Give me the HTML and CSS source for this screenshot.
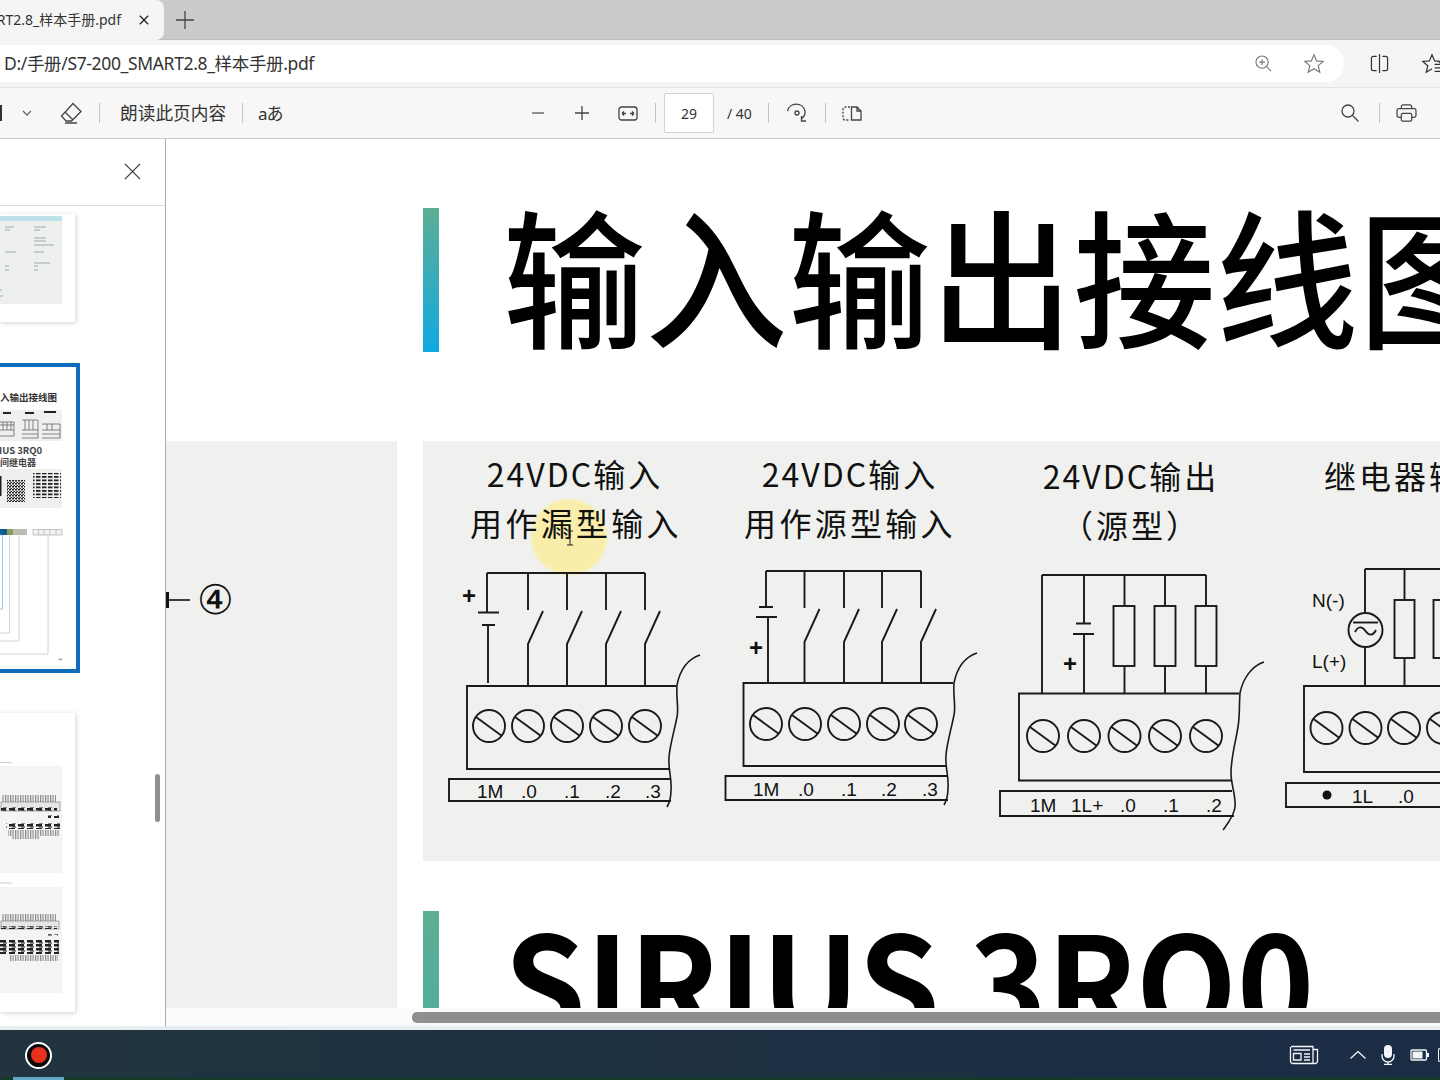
FILE: index.html
```html
<!DOCTYPE html>
<html lang="zh-CN">
<head>
<meta charset="utf-8">
<title>S7-200_SMART2.8_样本手册.pdf</title>
<link rel="stylesheet" href="styles.css">
</head>
<body>
<div class="app">
  <header class="tabstrip">
    <div class="tab">
      <span class="tab-title">S7-200_SMART2.8_样本手册.pdf</span>
      <svg class="tab-close" viewBox="0 0 12 12"><path d="M1 1 11 11M11 1 1 11"/></svg>
    </div>
    <svg class="tab-new" viewBox="0 0 18 18"><path d="M9 0V18M0 9H18"/></svg>
  </header>

  <div class="addressrow">
    <div class="addressbar">
      <span class="url">D:/手册/S7-200_SMART2.8_样本手册.pdf</span>
      <svg class="ic-zoom" viewBox="0 0 18 18"><circle cx="7.5" cy="7.5" r="6.5"/><path d="M12 12 17 17M7.5 4.5V10.5M4.5 7.5H10.5"/></svg>
      <svg class="ic-star" viewBox="0 0 24 24"><path d="M12 2 15 9 22.5 9.6 16.8 14.5 18.6 22 12 18 5.4 22 7.2 14.5 1.5 9.6 9 9Z"/></svg>
    </div>
    <svg class="ic-split" viewBox="0 0 20 20"><path d="M7 2.5H3.5A2 2 0 0 0 1.5 4.500V15.500A2 2 0 0 0 3.500 17.500H7M13 2.500H16.500A2 2 0 0 1 18.500 4.500V15.500A2 2 0 0 1 16.500 17.500H13M10 0V20"/></svg>
    <svg class="ic-fav" viewBox="0 0 24 24"><path d="M20 11 22.5 9.600 15 9 12 2 9 9 1.500 9.600 7.200 14.500 5.400 22 12 18M15 13H24M15 17H24M15 21H24"/></svg>
  </div>

  <nav class="toolbar">
    <span class="stub"></span>
    <svg class="ic-chev" viewBox="0 0 10 6"><path d="M1 1 5 5 9 1"/></svg>
    <svg class="ic-eraser" viewBox="0 0 22 22"><path d="M13 1.500 21 9.500 11.500 19 6 19 1.500 14 Z M5 10 12.500 17.500M5 21H17"/></svg>
    <span class="sep sep-a"></span>
    <span class="tool-text">朗读此页内容</span>
    <span class="sep sep-b"></span>
    <span class="tool-aa">aあ</span>
    <svg class="ic-minus" viewBox="0 0 14 14"><path d="M1 7H13"/></svg>
    <svg class="ic-plus" viewBox="0 0 14 14"><path d="M0 7H14M7 0V14"/></svg>
    <svg class="ic-fit" viewBox="0 0 20 15"><rect x="1" y="1" width="18" height="13" rx="2.500"/><path d="M4 7.500H8M4 7.500 6 5.500M4 7.500 6 9.500M12 7.500H16M16 7.500 14 5.500M16 7.500 14 9.500"/></svg>
    <span class="sep sep-c"></span>
    <span class="pagebox">29</span>
    <span class="pagecount">/ 40</span>
    <span class="sep sep-d"></span>
    <svg class="ic-rotate" viewBox="0 0 22 20"><path d="M1.500 8A9 9 0 0 1 19 8C19.500 11 18 14 15 16M15.500 13V18H20"/><circle cx="11" cy="10" r="2"/></svg>
    <span class="sep sep-e"></span>
    <svg class="ic-pages" viewBox="0 0 20 15"><path class="dash" d="M8 1H3A2 2 0 0 0 1 3V12A2 2 0 0 0 3 14H8"/><path d="M9.500 1H15L19 5V14H9.500ZM15 1V5H19"/></svg>
    <svg class="ic-search" viewBox="0 0 18 18"><circle cx="7" cy="7" r="6"/><path d="M11.500 11.500 17.500 17.500"/></svg>
    <span class="sep sep-f"></span>
    <svg class="ic-print" viewBox="0 0 22 19"><path d="M5.500 5V3A2 2 0 0 1 7.500 1H14.500A2 2 0 0 1 16.500 3V5M5.500 14H3A2 2 0 0 1 1 12V7A2 2 0 0 1 3 5H19A2 2 0 0 1 21 7V12A2 2 0 0 1 19 14H16.500"/><rect x="5.500" y="10" width="11" height="8" rx="1.500"/></svg>
  </nav>

  <div class="workspace">
    <aside class="sidebar">
      <div class="side-head">
        <svg class="ic-x" viewBox="0 0 18 18"><path d="M1 1 17 17M17 1 1 17"/></svg>
      </div>
      <div class="thumbs">
        <div class="thumb thumb-a">
          <svg class="thumb-svg" viewBox="0 214 75 108">
            <rect class="th-panel" x="0" y="216" width="62" height="88"/>
            <rect class="th-cyan" x="0" y="216" width="62" height="5"/>
            <path class="th-bits" d="M5 227H14M34 227H46M5 230H10M34 230H40M34 238H46M34 241H46M34 245H54M5 252H16M34 252H44M34 263H50M5 266H9M34 266H38M5 270H9M34 270H38M0 290H2M0 296H3"/>
          </svg>
        </div>
        <div class="thumb thumb-b">
          <svg class="thumb-svg" viewBox="0 367 76 302">
            <defs>
              <pattern id="qr" width="3" height="3" patternUnits="userSpaceOnUse"><rect class="th-dark" width="2" height="1.500"/><rect class="th-dark" x="1.500" y="2" width="1.500" height="1"/></pattern>
              <pattern id="txt" width="6" height="3.500" patternUnits="userSpaceOnUse"><rect class="th-dark" width="4.500" height="1.800"/></pattern>
            </defs>
            <text class="th-title" x="0" y="401">入输出接线图</text>
            <rect class="th-panel" x="0" y="410" width="62" height="31"/>
            <path class="th-mini" d="M0 422H14V436H0M0 425H14M0 430H14M3 422V430M7 422V430M11 422V430M22 420H38V438H22M22 430H38M25 420V430M29 420V430M33 420V430M22 434H38M42 424H60V438H42M42 430H60M47 424V430M52 424V430M42 434H60"/>
            <rect class="th-dark" x="3" y="412" width="8" height="2"/>
            <rect class="th-dark" x="25" y="412" width="9" height="2"/>
            <rect class="th-dark" x="44" y="411" width="12" height="2"/>
            <text class="th-sub" x="-1" y="454">IUS 3RQ0</text>
            <text class="th-sub2" x="0" y="466">间继电器</text>
            <rect class="th-panel" x="0" y="469" width="62" height="39"/>
            <rect x="7" y="480" width="18" height="22" class="th-qr"/>
            <rect x="33" y="473" width="28" height="25" class="th-text"/>
            <rect class="th-dark" x="0" y="476" width="1.500" height="20"/>
            <rect class="th-blue" x="0" y="529" width="7" height="6"/>
            <rect class="th-olive" x="7" y="529" width="6" height="6"/>
            <rect class="th-grey" x="13" y="529" width="14" height="6"/>
            <path class="th-cell" d="M33 529.500H62V535H33ZM38.500 529.500V535M44 529.500V535M50 529.500V535M56 529.500V535"/>
            <path class="th-fr-blue" d="M0 535H2.500V609H0"/>
            <path class="th-fr" d="M9.500 535V633H0M19 535V641H0M48 535V654H0"/>
            <rect class="th-mark" x="59" y="659" width="3" height="1"/>
          </svg>
        </div>
        <div class="thumb thumb-c">
          <svg class="thumb-svg" viewBox="0 713 75 299">
            <defs>
              <pattern id="hatch" width="2.500" height="4" patternUnits="userSpaceOnUse"><rect class="th-stripe" width="1.200" height="4"/></pattern>
              <pattern id="scrib" width="9" height="4" patternUnits="userSpaceOnUse"><rect class="th-dark" width="6" height="2.500"/><rect class="th-dark" x="3" y="2.500" width="4" height="1"/></pattern>
            </defs>
            <rect class="th-light" x="0" y="766" width="62" height="107"/>
            <rect class="th-light" x="0" y="887" width="62" height="106"/>
            <path class="th-mark" d="M0 762.500H12M0 883H12"/>
            <rect class="th-hatch" x="2" y="795" width="54" height="7"/>
            <rect class="th-frame" x="1" y="802" width="59" height="9"/>
            <rect class="th-band" x="1" y="807" width="56" height="4"/>
            <rect class="th-band" x="48" y="815" width="11" height="3"/>
            <rect class="th-band" x="6" y="823" width="54" height="6"/>
            <rect class="th-hatch" x="8" y="830" width="52" height="6"/>
            <rect class="th-hatch" x="12" y="836" width="28" height="3"/>
            <rect class="th-hatch" x="2" y="914" width="54" height="7"/>
            <rect class="th-frame" x="1" y="921" width="58" height="8"/>
            <rect class="th-band" x="1" y="926" width="56" height="3"/>
            <rect class="th-band" x="48" y="934" width="10" height="2"/>
            <rect class="th-band" x="0" y="940" width="59" height="14"/>
            <rect class="th-hatch" x="10" y="955" width="48" height="6"/>
          </svg>
        </div>
      </div>
      <span class="side-scroll"></span>
    </aside>

    <main class="viewer">
      <div class="page">
        <div class="heading">
          <span class="heading-bar"></span>
          <h1 class="heading-text">输入输出接线图</h1>
        </div>
        <div class="page-row">
          <div class="left-panel">
            <svg class="pin" viewBox="0 0 24 18"><path class="pin-bar" d="M1.500 1V17"/><path d="M1 9H24"/></svg>
            <span class="pin-num">④</span>
          </div>
          <div class="right-col">
            <div class="diagram-panel">
              <svg class="diagram" viewBox="423 441 1017 420">
                <defs>
                  <g id="screw"><circle cx="0" cy="0" r="16"/><path d="M-13 -9 13 10"/></g>
                  <g id="sw"><path d="M0 0V37M15 38 0 71V112"/></g>
                </defs>
                <circle class="spot" cx="569" cy="537" r="38"/>

                <text class="cap" x="575" y="487"><tspan class="lat">24VDC</tspan>输入</text>
                <text class="cap cap-w" x="576" y="536">用作漏型输入</text>
                <text class="cap" x="850" y="487"><tspan class="lat">24VDC</tspan>输入</text>
                <text class="cap cap-w" x="850" y="536">用作源型输入</text>
                <text class="cap" x="1131" y="489"><tspan class="lat">24VDC</tspan>输出</text>
                <text class="cap" x="1131" y="538">（源型）</text>
                <text class="cap cap-l" x="1324" y="489">继电器输出</text>

                <path class="cursor" d="M567 531H573M570 531V545M567 545H573"/>

                <!-- sinking input -->
                <g class="wire">
                  <path d="M487 573H645M487 573V612M478 612.500H499M482 625H495M488 625V683"/>
                  <use href="#sw" x="528" y="573"/><use href="#sw" x="567" y="573"/><use href="#sw" x="606" y="573"/><use href="#sw" x="645" y="573"/>
                  <path d="M676 686H467V769H669M670 779H449V801H671"/>
                  <path class="wave" d="M700 655C688 659 680 670 677 685C676 700 679 708 677 717C674 732 670 745 669 757C668 770 672 778 671 790C671 798 670 802 667 807"/>
                  <use href="#screw" x="489" y="726"/><use href="#screw" x="528" y="726"/><use href="#screw" x="567" y="726"/><use href="#screw" x="606" y="726"/><use href="#screw" x="645" y="726"/>
                </g>
                <text class="plus" x="469" y="604">+</text>
                <text class="lab" x="477" y="798">1M</text><text class="lab" x="521" y="798">.0</text><text class="lab" x="564" y="798">.1</text><text class="lab" x="605" y="798">.2</text><text class="lab" x="645" y="798">.3</text>

                <!-- sourcing input -->
                <g class="wire">
                  <path d="M766 571H921M766 571V607M759 607H773M756 617H777M768 617V683"/>
                  <use href="#sw" x="804.500" y="571"/><use href="#sw" x="844" y="571"/><use href="#sw" x="882" y="571"/><use href="#sw" x="921" y="571"/>
                  <path d="M953 683H743.500V766H946M947 776H725.500V800H948"/>
                  <path class="wave" d="M977 653C965 657 957 668 954 683C953 698 956 706 954 715C951 730 947 743 946 755C945 768 949 776 948 788C948 796 947 800 944 805"/>
                  <use href="#screw" x="766" y="724"/><use href="#screw" x="805" y="724"/><use href="#screw" x="844" y="724"/><use href="#screw" x="883" y="724"/><use href="#screw" x="921" y="724"/>
                </g>
                <text class="plus" x="756" y="656">+</text>
                <text class="lab" x="753" y="796">1M</text><text class="lab" x="798" y="796">.0</text><text class="lab" x="841" y="796">.1</text><text class="lab" x="881" y="796">.2</text><text class="lab" x="922" y="796">.3</text>

                <!-- sourcing output -->
                <g class="wire">
                  <path d="M1042 575H1206M1042 575V693M1084 575V623M1076 623.500H1091M1073 634H1094M1084 634V693"/>
                  <path d="M1124.500 575V606M1124.500 666V693M1165 575V606M1165 666V693M1206 575V606M1206 666V693"/>
                  <rect x="1113.500" y="606" width="21" height="60"/><rect x="1154.500" y="606" width="21" height="60"/><rect x="1195.500" y="606" width="21" height="60"/>
                  <path d="M1239 693.500H1019V780.500H1231M1232 791H1000V816H1234"/>
                  <path class="wave" d="M1264 662C1252 666 1243 678 1240 693C1239 706 1240 715 1238 727C1235 745 1231 758 1231 773C1231 785 1236 795 1235 807C1234 816 1228 823 1223 830"/>
                  <use href="#screw" x="1043" y="736"/><use href="#screw" x="1084" y="736"/><use href="#screw" x="1124.500" y="736"/><use href="#screw" x="1165" y="736"/><use href="#screw" x="1206" y="736"/>
                </g>
                <text class="plus" x="1070" y="672">+</text>
                <text class="lab" x="1030" y="812">1M</text><text class="lab" x="1071" y="812">1L+</text><text class="lab" x="1120" y="812">.0</text><text class="lab" x="1163" y="812">.1</text><text class="lab" x="1206" y="812">.2</text>

                <!-- relay output -->
                <g class="wire">
                  <path d="M1365 569H1440M1365 569V612M1365 648V686M1404.500 569V600M1404.500 658V686M1443 569V600M1443 658V686"/>
                  <circle cx="1365.500" cy="630" r="17"/>
                  <path d="M1353 622.500H1378"/>
                  <path d="M1355 632C1358 626 1362 626 1365.500 631C1369 636 1373 636 1376 630"/>
                  <rect x="1394.500" y="600" width="20" height="58"/><rect x="1433.500" y="600" width="20" height="58"/>
                  <path d="M1450 686H1304V772H1450M1450 783H1286V807H1450"/>
                  <use href="#screw" x="1326.500" y="728"/><use href="#screw" x="1365.500" y="728"/><use href="#screw" x="1404" y="728"/><use href="#screw" x="1443" y="728"/>
                </g>
                <text class="lab" x="1312" y="607">N(-)</text>
                <text class="lab" x="1312" y="668">L(+)</text>
                <circle class="dot" cx="1327" cy="795" r="4.500"/>
                <text class="lab" x="1352" y="803">1L</text><text class="lab" x="1398" y="803">.0</text>
              </svg>
            </div>
            <div class="heading heading-second">
              <span class="heading-bar heading-bar-green"></span>
              <h2 class="heading-latin">SIRIUS 3RQ0</h2>
            </div>
          </div>
        </div>
      </div>
      <div class="hscroll"><span class="hscroll-thumb"></span></div>
    </main>
  </div>

  <footer class="taskbar">
    <span class="rec"><span class="rec-dot"></span></span>
    <span class="rec-line"></span>
    <div class="tray">
      <svg class="ic-news" viewBox="0 0 30 20"><path d="M2 1.500H24V18.500H4A2.500 2.500 0 0 1 1.500 16V2M24 4.500H28.500V16A2.500 2.500 0 0 1 26 18.500H24"/><path d="M4.500 5H21M4.500 8.500H12V15H4.500ZM15 9H21M15 12H21M15 15H21"/></svg>
      <svg class="ic-up" viewBox="0 0 16 8"><path d="M.5 7.500 8 .5 15.500 7.500"/></svg>
      <svg class="ic-mic" viewBox="0 0 14 20"><rect class="solid" x="3" y="0" width="8" height="13" rx="4"/><path d="M1 9V11A6 6 0 0 0 13 11V9M7 17V19.500M3 19.500H11"/></svg>
      <svg class="ic-batt" viewBox="0 0 19 12"><rect x="1" y="1" width="15.500" height="10" rx="1"/><rect class="solid" x="2.500" y="2.500" width="10" height="7"/><rect class="solid" x="17" y="4" width="2" height="4"/></svg>
      <span class="tray-cut"></span>
    </div>
  </footer>
</div>
</body>
</html>
```

FILE: styles.css
```css
* { box-sizing: border-box; }
html, body { margin: 0; padding: 0; }
body { width: 1440px; height: 1080px; overflow: hidden; background: #fff; font-family: "Noto Sans", "Noto Sans CJK SC", sans-serif; color: #222; }
svg { display: block; flex: none; fill: none; stroke: #333; }
.app { display: flex; flex-direction: column; height: 1080px; width: 1440px; }

/* tab strip */
.tabstrip { height: 40px; background: #cbcbcb; display: flex; align-items: center; flex: none; box-shadow: inset 0 -1px 0 #bdbdbd; }
.tab { width: 164px; height: 40px; background: #f5f5f5; border-radius: 0 8px 8px 0; display: flex; align-items: center; justify-content: flex-end; overflow: hidden; padding-right: 15px; }
.tab-title { white-space: nowrap; font-size: 14px; letter-spacing: 0; flex: none; margin: -2px 18px 0 0; color: #333; }
.tab-close { width: 10px; height: 10px; stroke-width: 1.600; stroke: #222; }
.tab-new { width: 18px; height: 18px; margin-left: 12px; stroke: #444; stroke-width: 1.300; }

/* address row */
.addressrow { height: 48px; flex: none; background: #f5f5f5; display: flex; align-items: center; border-bottom: 1px solid #e6e6e6; }
.addressbar { width: 1344px; height: 37px; background: #fff; border-radius: 0 18px 18px 0; display: flex; align-items: center; padding-left: 4px; flex: none; }
.url { font-size: 17.500px; letter-spacing: -0.350px; width: 1250px; white-space: nowrap; color: #333; flex: none; margin-top: -2px; }
.ic-zoom { width: 17px; height: 17px; stroke: #777; stroke-width: 1.200; margin-left: 1px; }
.ic-star { width: 22px; height: 21px; stroke: #777; stroke-width: 1.300; margin-left: 31px; }
.ic-split { width: 19px; height: 19px; stroke: #333; stroke-width: 1.300; margin-left: 26px; }
.ic-fav { width: 22px; height: 21px; stroke: #333; stroke-width: 1.400; margin-left: 32px; }

/* pdf toolbar */
.toolbar { height: 51px; flex: none; background: #f7f7f7; border-bottom: 1px solid #c9c9c9; display: flex; align-items: center; color: #333; }
.toolbar svg { stroke: #444; stroke-width: 1.300; }
.stub { width: 2px; height: 16px; background: #333; flex: none; }
.ic-chev { width: 10px; height: 6px; margin-left: 20px; stroke: #666 !important; }
.ic-eraser { width: 22px; height: 22px; margin-left: 28px; }
.sep { width: 1px; height: 20px; background: #c4c4c4; flex: none; }
.sep-a { margin-left: 17px; }
.tool-text { font-size: 17.700px; margin: -2px 0 0 20px; width: 106px; white-space: nowrap; flex: none; }
.sep-b { margin-left: 16px; }
.tool-aa { font-size: 17px; margin: -2px 0 0 15px; width: 24px; white-space: nowrap; flex: none; letter-spacing: -1px; }
.ic-minus { width: 14px; height: 14px; margin-left: 249px; stroke: #555 !important; }
.ic-plus { width: 14px; height: 14px; margin-left: 30px; }
.ic-fit { width: 20px; height: 15px; margin-left: 29px; }
.sep-c { margin-left: 17px; }
.pagebox { width: 50px; height: 40px; margin-left: 8px; background: #fff; border: 1px solid #d2d2d2; border-radius: 2px; font-size: 14px; display: flex; align-items: center; justify-content: center; flex: none; }
.pagecount { font-size: 14px; margin-left: 13px; width: 26px; white-space: nowrap; flex: none; }
.sep-d { margin-left: 15px; }
.ic-rotate { width: 22px; height: 20px; margin-left: 17px; }
.sep-e { margin-left: 17px; }
.ic-pages { width: 20px; height: 15px; margin-left: 16px; }
.dash { stroke-dasharray: 2 1.500; }
.ic-search { width: 18px; height: 18px; margin-left: 479px; }
.sep-f { margin-left: 20px; }
.ic-print { width: 21px; height: 18px; margin-left: 16px; }

/* workspace */
.workspace { height: 887px; flex: none; display: flex; }
.sidebar { width: 166px; flex: none; background: #fff; border-right: 1px solid #ababab; position: relative; overflow: hidden; }
.side-head { height: 67px; border-bottom: 1px solid #dedede; display: flex; align-items: center; justify-content: flex-end; padding: 0 24px 2px 0; }
.ic-x { width: 17px; height: 17px; stroke: #333; stroke-width: 1.200; }
.thumbs { display: flex; flex-direction: column; align-items: flex-start; padding-top: 8px; }
.thumb { background: #fff; box-shadow: 1px 1px 5px rgba(0,0,0,.18); flex: none; }
.thumb-a { width: 75px; height: 108px; }
.thumb-b { width: 80px; height: 310px; margin-top: 41px; border: 4px solid #0f6cbd; border-left: 0; box-shadow: none; }
.thumb-c { width: 75px; height: 299px; margin-top: 40px; }
.thumb-svg { width: 100%; height: 100%; stroke: none; }
.thumb-a .thumb-svg, .thumb-c .thumb-svg { filter: blur(.25px); }
.th-panel { fill: #eef0ee; stroke: none; }
.th-cyan { fill: #bfe1ea; stroke: none; }
.th-bits { stroke: #9aa; stroke-width: 1; }
.th-dark { fill: #222; stroke: none; }
.th-title { font-size: 9.500px; font-weight: 700; fill: #333; stroke: none; font-family: "Noto Sans CJK SC", sans-serif; }
.th-sub { font-size: 9.500px; font-weight: 700; fill: #444; stroke: none; font-family: "Noto Sans CJK SC", sans-serif; }
.th-sub2 { font-size: 9px; font-weight: 700; fill: #444; stroke: none; font-family: "Noto Sans CJK SC", sans-serif; }
.th-mini { stroke: #555; stroke-width: .7; }
.th-qr { fill: url(#qr); stroke: none; }
.th-text { fill: url(#txt); stroke: none; }
.th-blue { fill: #0f5a96; stroke: none; }
.th-olive { fill: #8a9f54; stroke: none; }
.th-grey { fill: #b9bdb2; stroke: none; }
.th-cell { stroke: #b5b5b5; stroke-width: .8; fill: #f2f2f2; }
.th-fr { stroke: #c9c9c9; stroke-width: .8; }
.th-fr-blue { stroke: #8fb7d8; stroke-width: .8; }
.th-mark { fill: #888; stroke: #aaa; stroke-width: .6; }
.th-light { fill: #f4f4f4; stroke: none; }
.th-stripe { fill: #8a8a8a; stroke: none; }
.th-hatch { fill: url(#hatch); stroke: none; }
.th-frame { fill: #e6e6e6; stroke: #777; stroke-width: .6; }
.th-band { fill: url(#scrib); stroke: none; }
.side-scroll { position: absolute; left: 155px; top: 635px; width: 5px; height: 48px; background: #8f8f8f; border-radius: 3px; }

/* pdf viewer */
.viewer { flex: 1; min-width: 0; display: flex; flex-direction: column; background: #fbfbfb; overflow: hidden; }
.page { height: 869px; flex: none; background: #fff; overflow: hidden; padding-top: 69px; }
.heading { display: flex; align-items: center; margin-left: 257px; white-space: nowrap; }
.heading-bar { width: 16px; height: 144px; flex: none; background: linear-gradient(180deg, #5dae94, #10a9e2); }
.heading-text { margin: 0 0 0 64px; padding-bottom: 16px; font-family: "Noto Sans CJK SC", sans-serif; font-weight: 500; font-size: 142px; line-height: 128px; color: #000; flex: none; letter-spacing: .600px; transform: scaleY(1.050); transform-origin: 50% 50%; }
.page-row { display: flex; gap: 26px; margin-top: 89px; width: 1274px; }
.left-panel { width: 231px; height: 567px; background: #f0f1ee; flex: none; display: flex; align-items: flex-start; padding-top: 139px; align-self: flex-start; }
.pin { width: 24px; height: 18px; stroke: #111; stroke-width: 1.600; margin-top: 11px; }
.pin-bar { stroke-width: 3; }
.pin-num { font-family: "DejaVu Sans", "Noto Sans CJK SC", sans-serif; font-size: 41px; line-height: 40px; margin: 0 0 0 7px; color: #111; }
.right-col { flex: 1; min-width: 0; }
.diagram-panel { height: 420px; background: #f0f1ee; overflow: hidden; }
.diagram { width: 1017px; height: 420px; stroke: none; }
.spot { fill: #f8eeaa; stroke: none; filter: blur(1px); }
.cap { font-family: "Noto Sans CJK SC", sans-serif; font-size: 32px; letter-spacing: 3px; text-anchor: middle; fill: #111; stroke: none; }
.cap-w { letter-spacing: 3.300px; }
.lat { letter-spacing: 2px; }
.cap-l { text-anchor: start; }
.cursor { stroke: #222; stroke-width: 1; }
.wire { stroke: #1a1a1a; stroke-width: 1.900; fill: none; }
.wave { stroke-width: 1.600; }
.plus { font-family: "Liberation Sans", sans-serif; font-size: 24px; font-weight: 700; text-anchor: middle; fill: #111; stroke: none; }
.lab { font-family: "Liberation Sans", sans-serif; font-size: 19px; fill: #111; stroke: none; }
.dot { fill: #111; stroke: none; }
.heading-second { margin-left: 0; margin-top: 50px; }
.heading-bar-green { background: linear-gradient(180deg, #5dae94, #4fae9e); }
.heading-latin { margin: 0 0 0 65px; padding-bottom: 12px; font-family: "Noto Sans CJK SC", sans-serif; font-weight: 700; font-size: 131px; line-height: 132px; color: #000; flex: none; transform: scaleY(1.050); }

/* horizontal scrollbar */
.hscroll { height: 18px; flex: none; padding: 4px 0 0 246px; }
.hscroll-thumb { display: block; height: 11px; background: #8f8f8f; border-radius: 5px 0 0 5px; }

/* taskbar */
.taskbar { height: 54px; flex: none; border-top: 4px solid #e9edf0; background: linear-gradient(to top, #143a2c 3px, transparent 3px), linear-gradient(90deg, #21343f, #1b2c45); display: flex; align-items: center; position: relative; padding-left: 25px; }
.rec { width: 27px; height: 27px; border-radius: 50%; background: #0a0a0a; border: 2px solid #fff; display: flex; align-items: center; justify-content: center; flex: none; }
.rec-dot { width: 16px; height: 16px; border-radius: 50%; background: #e8301c; }
.rec-line { position: absolute; left: 13px; bottom: 0; width: 51px; height: 3px; background: #62a9c4; }
.tray { margin: 0 -2px 0 auto; display: flex; align-items: center; }
.tray svg { stroke: #f2f5f7; stroke-width: 1.300; }
.solid { fill: #f2f5f7; stroke: none; }
.ic-news { width: 30px; height: 20px; }
.ic-up { width: 16px; height: 8px; margin-left: 31px; }
.ic-mic { width: 14px; height: 20px; margin-left: 15px; }
.ic-batt { width: 19px; height: 12px; margin-left: 15px; }
.tray-cut { width: 4px; height: 14px; border: 1px solid #f2f5f7; border-right: 0; border-radius: 2px 0 0 2px; margin-left: 9px; }
```
